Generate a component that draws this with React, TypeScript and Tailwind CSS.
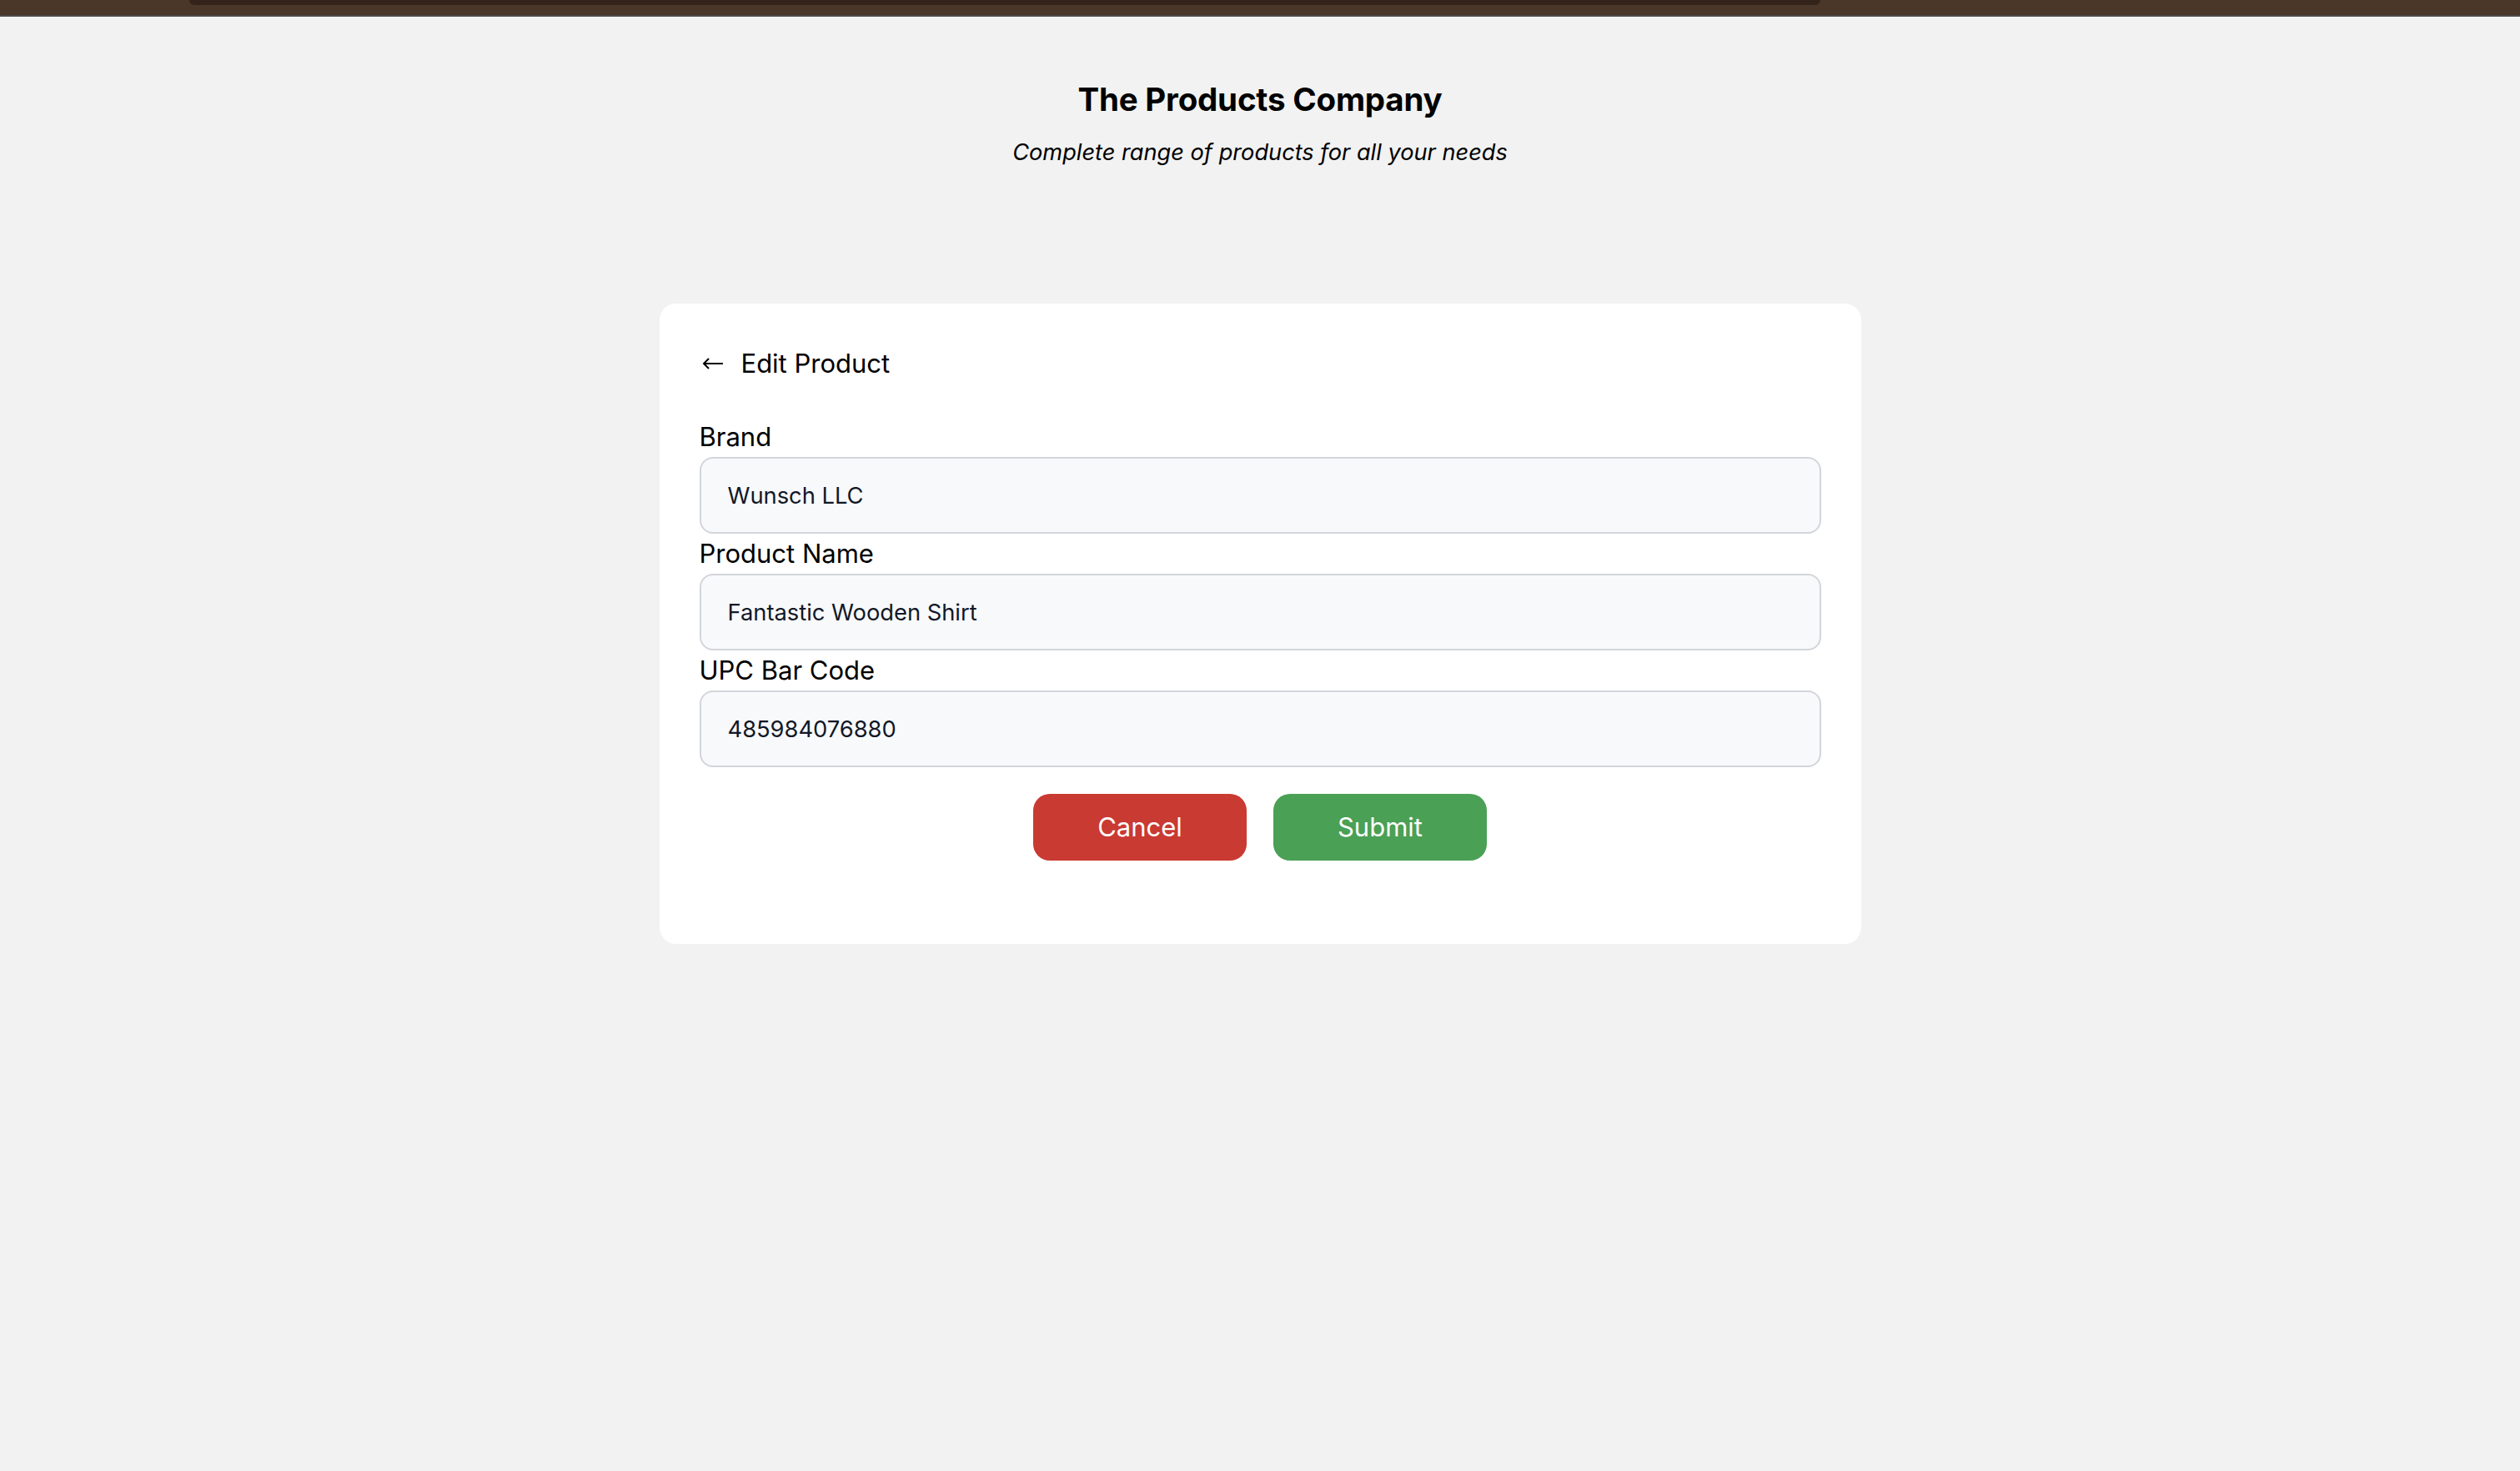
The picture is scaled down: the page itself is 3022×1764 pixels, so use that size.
import { useState } from "react";

const fields = [
  { label: "Brand", value: "Wunsch LLC" },
  { label: "Product Name", value: "Fantastic Wooden Shirt" },
  { label: "UPC Bar Code", value: "485984076880" },
];

const App = () => {
  const [values, setValues] = useState(fields.map((f) => f.value));

  return (
    <div className="min-h-screen bg-[#f2f2f2] font-['Inter',sans-serif] text-black">
      {/* window chrome strip at the very top */}
      <div className="h-5 w-full border-b-2 border-[#4d4a48] bg-[#4b3729]">
        <div className="ml-[227px] h-[6px] w-[1956px] rounded-b-[10px] bg-[#33231a]" />
      </div>

      <header className="flex flex-col items-center pt-[76px]">
        <h1 className="text-[38.5px] font-bold leading-[47px] tracking-[-0.2px]">The Products Company</h1>
        <p className="mt-5 text-[27.2px] italic leading-[40px]">
          Complete range of products for all your needs
        </p>
      </header>

      <div className="mx-auto mt-[161px] w-[1441px] rounded-[20px] bg-white px-12 pt-12 pb-[100px]">
        <div className="mb-10 flex h-12 items-center gap-[21px] pl-[3px]">
          <svg width="26" height="14" viewBox="0 0 26 14" fill="none" stroke="currentColor" strokeWidth="2">
            <path d="M25 7H2" />
            <path d="M8 1L2 7L8 13" />
          </svg>
          <span className="text-[31px] leading-[48px]">Edit Product</span>
        </div>

        <form onSubmit={(e) => e.preventDefault()}>
          {fields.map((f, i) => (
            <label key={f.label} className="block">
              <span className="block text-[31px] leading-[48px]">{f.label}</span>
              <input
                value={values[i]}
                onChange={(e) => setValues(values.map((v, j) => (j === i ? e.target.value : v)))}
                className="h-[92px] w-full rounded-[16px] border-2 border-[#d3d5db] bg-[#f8f9fb] px-8 text-[27.3px] text-[#111827] outline-none"
              />
            </label>
          ))}

          <div className="mt-8 flex justify-center gap-8">
            <button type="button" className="h-20 w-64 rounded-[20px] bg-[#c93a33] text-[31px] text-white">
              Cancel
            </button>
            <button type="submit" className="h-20 w-64 rounded-[20px] bg-[#4aa055] text-[31px] text-white">
              Submit
            </button>
          </div>
        </form>
      </div>
    </div>
  );
};

export default App;
